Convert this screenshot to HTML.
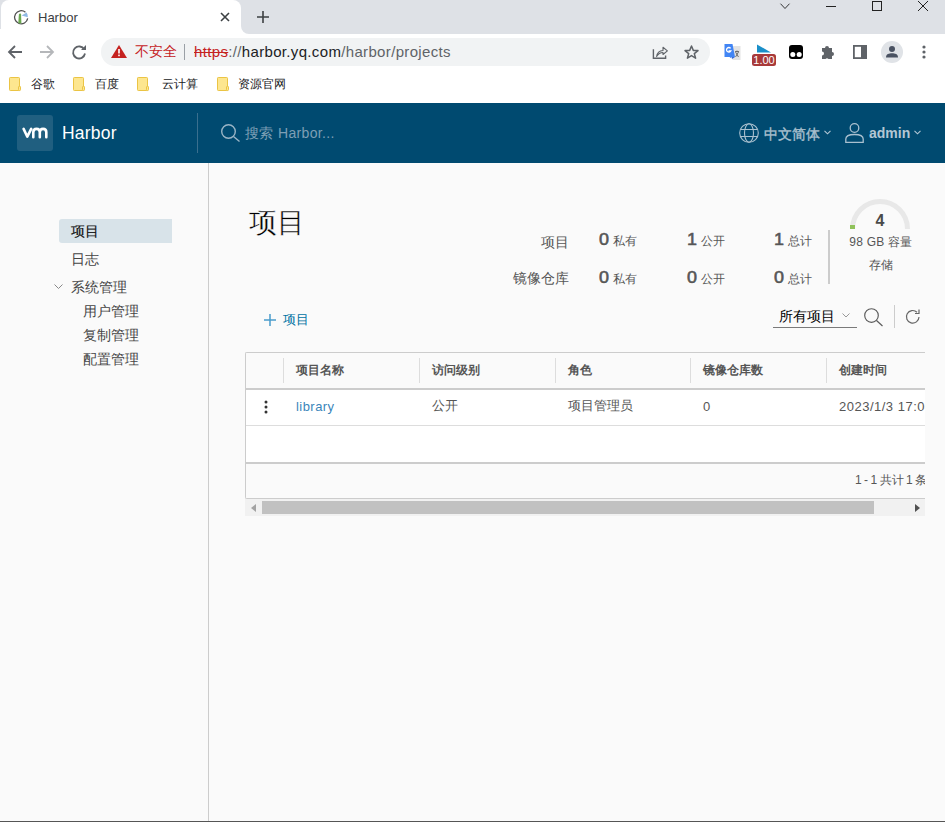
<!DOCTYPE html>
<html><head><meta charset="utf-8"><style>
*{box-sizing:border-box;margin:0;padding:0}
html,body{width:945px;height:822px;overflow:hidden;background:#fafafa;font-family:"Liberation Sans",sans-serif;position:relative}
.a{position:absolute;white-space:nowrap}
svg{position:absolute;overflow:visible}
/* chrome */
#tabstrip{left:0;top:0;width:945px;height:34px;background:#dee1e6}
#tabfoot{left:0;top:29px;width:2px;height:5px;background:#fff}
#tabr{left:241px;top:26px;width:8px;height:8px;background:#fff}
#tabr2{left:241px;top:26px;width:16px;height:8px;background:#dee1e6;border-bottom-left-radius:8px}
#tab{left:1px;top:0;width:240px;height:34px;background:#fff;border-radius:8px 8px 0 0}
#toolbar{left:0;top:34px;width:945px;height:35px;background:#fff}
#omni{left:101px;top:38px;width:609px;height:28px;background:#f1f3f4;border-radius:14px}
#bmbar{left:0;top:69px;width:945px;height:34px;background:#fff}
.bm{font-size:12px;color:#202124;top:77px;line-height:14px}
.fold{width:12px;height:14px;top:77px;background:#fde293;border:1px solid #f0c44c;border-radius:2px}
/* harbor header */
#hdr{left:0;top:103px;width:945px;height:60px;background:#004a70}
#side{left:0;top:163px;width:209px;height:659px;background:#fafafa;border-right:1px solid #ccc}
#bottomline{left:0;top:821px;width:945px;height:1px;background:#555}
.nav{font-size:14px;color:#454545;line-height:16px}
.stat-l{font-size:14px;color:#565656;line-height:16px}
.num{font-size:16px;font-weight:normal;-webkit-text-stroke:0.55px #565656;color:#565656;line-height:16px;text-align:right;transform:scaleX(1.12);transform-origin:right center}
.lab{font-size:12px;color:#565656;line-height:14px}
.th{font-size:12px;font-weight:bold;color:#555;line-height:14px}
.td{font-size:13px;color:#565656;line-height:14px}
.cdiv{width:1px;height:25px;top:358px;background:#ddd}
</style></head><body>
<!-- tab strip -->
<div class="a" id="tabstrip"></div>
<div class="a" id="tab"></div><div class="a" id="tabfoot"></div><div class="a" id="tabr"></div><div class="a" id="tabr2"></div>
<svg style="left:14px;top:9.5px" width="15" height="15" viewBox="0 0 15 15"><path d="M11.44 2.24A6.6 6.6 0 1 0 13.7 8.45" fill="none" stroke="#505050" stroke-width="1.3"/><path d="M4.3 13.2L4.9 4.2L6.2 3.3L7.1 4.2L7.4 13.5Z" fill="#6aa84f"/><path d="M7.6 5.6L12.6 2.6L13.6 4.8L13.8 7.2Z" fill="#8fb8e3"/></svg>
<div class="a" style="left:38px;top:10px;font-size:13px;color:#3c4043;line-height:15px">Harbor</div>
<svg style="left:220px;top:12px" width="10" height="10" viewBox="0 0 10 10"><path d="M1 1L9 9M9 1L1 9" stroke="#3c4043" stroke-width="1.6"/></svg>
<svg style="left:257px;top:11px" width="12" height="12" viewBox="0 0 12 12"><path d="M6 0V12M0 6H12" stroke="#3c4043" stroke-width="1.6"/></svg>
<!-- window controls -->
<svg style="left:780px;top:3px" width="10" height="7" viewBox="0 0 10 7"><path d="M0.5 0.7L5 5.5L9.5 0.7" fill="none" stroke="#222" stroke-width="0.9"/></svg>
<svg style="left:826px;top:6px" width="10" height="1" viewBox="0 0 10 1"><path d="M0 0.5H10" stroke="#222" stroke-width="1"/></svg>
<svg style="left:872px;top:1px" width="10" height="10" viewBox="0 0 10 10"><rect x="0.5" y="0.5" width="9" height="9" fill="none" stroke="#222" stroke-width="1"/></svg>
<svg style="left:918px;top:1px" width="10" height="10" viewBox="0 0 10 10"><path d="M0 0L10 10M10 0L0 10" stroke="#222" stroke-width="1"/></svg>
<!-- toolbar -->
<div class="a" id="toolbar"></div>
<svg style="left:8px;top:45px" width="14" height="14" viewBox="0 0 14 14"><path d="M14 7H1.5M7 1L1 7L7 13" fill="none" stroke="#5f6368" stroke-width="1.8"/></svg>
<svg style="left:40px;top:45px" width="14" height="14" viewBox="0 0 14 14"><path d="M0 7H12.5M7 1L13 7L7 13" fill="none" stroke="#b5b7ba" stroke-width="1.8"/></svg>
<svg style="left:72px;top:45px" width="15" height="15" viewBox="0 0 15 15"><path d="M12.3 4.5A6 6 0 1 0 13 8.5" fill="none" stroke="#5f6368" stroke-width="1.8"/><path d="M9 5H14V0Z" fill="#5f6368"/></svg>
<div class="a" id="omni"></div>
<svg style="left:111px;top:45px" width="16" height="13" viewBox="0 0 16 13"><path d="M8 0L16 13H0Z" fill="#c5221f"/><rect x="7.2" y="4" width="1.6" height="4.5" fill="#fff"/><rect x="7.2" y="9.6" width="1.6" height="1.6" fill="#fff"/></svg>
<div class="a" style="left:135px;top:43px;font-size:14px;color:#c5221f;line-height:17px">不安全</div>
<div class="a" style="left:184px;top:44px;width:1px;height:16px;background:#9aa0a6"></div>
<div class="a" style="left:194px;top:43px;font-size:15px;line-height:17px;color:#202124;letter-spacing:0.34px"><span style="color:#c5221f;text-decoration:line-through">https</span><span style="color:#5f6368">://</span>harbor.yq.com<span style="color:#5f6368">/harbor/projects</span></div>
<svg style="left:652px;top:45px" width="17" height="15" viewBox="0 0 17 15"><path d="M1.4 4.2V13.3H13.6V10.6" fill="none" stroke="#5f6368" stroke-width="1.4"/><path d="M4.6 11.6C5.2 7.6 7.8 5.6 11 5.5V2.3L15.4 5.9L11 9.5V7.5C8.4 7.5 6.2 8.8 4.6 11.6Z" fill="none" stroke="#5f6368" stroke-width="1.1" stroke-linejoin="round"/></svg>
<svg style="left:684px;top:45px" width="15" height="14" viewBox="0 0 15 14"><path d="M7.5 1L9.3 5.4L14 5.6L10.3 8.6L11.6 13.2L7.5 10.6L3.4 13.2L4.7 8.6L1 5.6L5.7 5.4Z" fill="none" stroke="#5f6368" stroke-width="1.5" stroke-linejoin="round"/></svg>
<!-- extensions -->
<svg style="left:724px;top:44px" width="17" height="17" viewBox="0 0 17 17"><rect x="8.5" y="2" width="8" height="14" fill="#e3e3e3"/><path d="M11 7.5H15M13 6.5V7.5M11.5 13L14.5 8M11.5 8L14.5 13" stroke="#555" stroke-width="0.8" fill="none"/><path d="M0.5 0H8.5L11 13H7.5L6.8 14L5.5 13H0.5Z" fill="#4285f4"/><path d="M7.5 13L11 13L8 15Z" fill="#3367d6"/><path d="M6.6 4.3A2.3 2.3 0 1 0 6.8 7H4.6" fill="none" stroke="#fff" stroke-width="1.3"/></svg>
<svg style="left:752px;top:44px" width="24" height="22" viewBox="0 0 24 22"><path d="M5 0.5L19 8.5H5Z" fill="#1a8fc9"/><rect x="0" y="10" width="24" height="12" rx="2.5" fill="#a83a3a"/><text x="12" y="20" font-size="11" text-anchor="middle" fill="#fff" font-family="Liberation Sans">1.00</text></svg>
<svg style="left:789px;top:45px" width="14" height="14" viewBox="0 0 14 14"><rect x="0" y="0" width="14" height="14" rx="3" fill="#000"/><circle cx="3.8" cy="9.6" r="2.5" fill="#fff"/><circle cx="10.2" cy="9.6" r="2.5" fill="#fff"/></svg>
<svg style="left:820px;top:44px" width="16" height="16" viewBox="0 0 16 16"><path d="M2 4H5A2 2 0 0 1 9 4H12V8A2 2 0 0 1 12 12V15H8.5A2 2 0 0 0 5.5 15H2V11.5A2 2 0 0 0 2 7.5Z" fill="#5f6368"/></svg>
<svg style="left:853px;top:45px" width="14" height="14" viewBox="0 0 14 14"><rect x="0.9" y="0.9" width="12.2" height="12.2" fill="none" stroke="#5f6368" stroke-width="1.8"/><rect x="8" y="1" width="5" height="12" fill="#5f6368"/></svg>
<svg style="left:881px;top:41px" width="22" height="22" viewBox="0 0 22 22"><circle cx="11" cy="11" r="11" fill="#e0e3e7"/><circle cx="11" cy="8" r="3" fill="#4a5262"/><path d="M5 16.5C5 13 8 12.3 11 12.3S17 13 17 16.5Z" fill="#4a5262"/></svg>
<svg style="left:922px;top:45px" width="4" height="14" viewBox="0 0 4 14"><circle cx="2" cy="2" r="1.6" fill="#5f6368"/><circle cx="2" cy="7" r="1.6" fill="#5f6368"/><circle cx="2" cy="12" r="1.6" fill="#5f6368"/></svg>
<!-- bookmarks -->
<div class="a" id="bmbar"></div>
<svg style="left:9px;top:77px" width="12" height="14" viewBox="0 0 12 14"><rect x="0.5" y="0.5" width="10" height="13" rx="0.8" fill="#fde68f" stroke="#ebc444" stroke-width="1"/><rect x="9.5" y="9.3" width="2" height="4.2" rx="0.8" fill="#fde68f" stroke="#ebc444" stroke-width="1"/></svg><div class="a bm" style="left:31px">谷歌</div>
<svg style="left:73px;top:77px" width="12" height="14" viewBox="0 0 12 14"><rect x="0.5" y="0.5" width="10" height="13" rx="0.8" fill="#fde68f" stroke="#ebc444" stroke-width="1"/><rect x="9.5" y="9.3" width="2" height="4.2" rx="0.8" fill="#fde68f" stroke="#ebc444" stroke-width="1"/></svg><div class="a bm" style="left:95px">百度</div>
<svg style="left:137px;top:77px" width="12" height="14" viewBox="0 0 12 14"><rect x="0.5" y="0.5" width="10" height="13" rx="0.8" fill="#fde68f" stroke="#ebc444" stroke-width="1"/><rect x="9.5" y="9.3" width="2" height="4.2" rx="0.8" fill="#fde68f" stroke="#ebc444" stroke-width="1"/></svg><div class="a bm" style="left:162px">云计算</div>
<svg style="left:217px;top:77px" width="12" height="14" viewBox="0 0 12 14"><rect x="0.5" y="0.5" width="10" height="13" rx="0.8" fill="#fde68f" stroke="#ebc444" stroke-width="1"/><rect x="9.5" y="9.3" width="2" height="4.2" rx="0.8" fill="#fde68f" stroke="#ebc444" stroke-width="1"/></svg><div class="a bm" style="left:238px">资源官网</div>

<!-- harbor header -->
<div class="a" id="hdr"></div>
<div class="a" style="left:17px;top:115px;width:36px;height:36px;background:#205f80;border-radius:3px"></div>
<svg style="left:17px;top:115px" width="36" height="36" viewBox="0 0 36 36"><path d="M6.6 13.9L10.3 21.7L14.2 13.9M16.3 22.3V17.2Q16.3 13.9 19.55 13.9Q22.8 13.9 22.8 17.2V22.3M22.8 17.2Q22.8 13.9 26.05 13.9Q29.3 13.9 29.3 17.2V22.3" fill="none" stroke="#fff" stroke-width="2.6" stroke-linecap="round" stroke-linejoin="round"/></svg>
<div class="a" style="left:62px;top:124px;font-size:17.5px;color:#fff;line-height:18px;letter-spacing:0.2px">Harbor</div>
<div class="a" style="left:197px;top:113px;width:1px;height:40px;background:#3a6f8e"></div>
<svg style="left:221px;top:124px" width="20" height="18" viewBox="0 0 20 18"><circle cx="7.5" cy="7.5" r="6.8" fill="none" stroke="#9ab5c6" stroke-width="1.4"/><path d="M12.5 12.5L18.5 17.5" stroke="#9ab5c6" stroke-width="1.4"/></svg>
<div class="a" style="left:245px;top:125px;font-size:14px;color:#7d9fb5;line-height:16px;letter-spacing:0.35px">搜索 Harbor...</div>
<svg style="left:739px;top:123px" width="20" height="20" viewBox="0 0 20 20"><g fill="none" stroke="#a9c0cf" stroke-width="1.1"><circle cx="10" cy="10" r="9.3"/><ellipse cx="10" cy="10" rx="4.5" ry="9.3"/><path d="M1.8 6.5H18.2M1.8 13.5H18.2"/></g></svg>
<div class="a" style="left:764px;top:125.5px;font-size:14px;color:#aac0ce;line-height:16px;-webkit-text-stroke:0.35px #aac0ce">中文简体</div>
<svg style="left:824px;top:130px" width="7" height="5" viewBox="0 0 7 5"><path d="M0.5 0.8L3.5 3.8L6.5 0.8" fill="none" stroke="#b3c7d4" stroke-width="1.1"/></svg>
<svg style="left:845px;top:123px" width="19" height="20" viewBox="0 0 19 20"><g fill="none" stroke="#a9c0cf" stroke-width="1.3"><circle cx="9.5" cy="5" r="4.3"/><path d="M0.8 19.3V16C0.8 13 4 11.5 9.5 11.5S18.2 13 18.2 16V19.3Z"/></g></svg>
<div class="a" style="left:869px;top:125px;font-size:14px;font-weight:bold;color:#b3c7d4;line-height:16px">admin</div>
<svg style="left:914px;top:130px" width="7" height="5" viewBox="0 0 7 5"><path d="M0.5 0.8L3.5 3.8L6.5 0.8" fill="none" stroke="#b3c7d4" stroke-width="1.1"/></svg>

<!-- sidebar -->
<div class="a" id="side"></div>
<div class="a" style="left:59px;top:219px;width:113px;height:24px;background:#d8e3e9;border-radius:3px 0 0 3px"></div>
<div class="a nav" style="left:71px;top:223px;color:#111;-webkit-text-stroke:0.15px #111">项目</div>
<div class="a nav" style="left:70.5px;top:251px">日志</div>
<svg style="left:54px;top:284px" width="9" height="5" viewBox="0 0 9 5"><path d="M0.5 0.5L4.5 4.5L8.5 0.5" fill="none" stroke="#888" stroke-width="1"/></svg>
<div class="a nav" style="left:71px;top:279px">系统管理</div>
<div class="a nav" style="left:83px;top:303px">用户管理</div>
<div class="a nav" style="left:83px;top:327px">复制管理</div>
<div class="a nav" style="left:83px;top:351px">配置管理</div>

<!-- main -->
<div class="a" style="left:249px;top:206.5px;font-size:27.5px;font-weight:300;color:#000;line-height:32px;-webkit-text-stroke:0.45px #fafafa">项目</div>
<div class="a stat-l" style="left:541px;top:234px">项目</div>
<div class="a stat-l" style="left:513px;top:270px">镜像仓库</div>
<div class="a num" style="left:578px;top:232px;width:31px">0</div><div class="a lab" style="left:613px;top:234px">私有</div>
<div class="a num" style="left:666px;top:232px;width:31px">1</div><div class="a lab" style="left:701px;top:234px">公开</div>
<div class="a num" style="left:753px;top:232px;width:31px">1</div><div class="a lab" style="left:788px;top:234px">总计</div>
<div class="a num" style="left:578px;top:270px;width:31px">0</div><div class="a lab" style="left:613px;top:272px">私有</div>
<div class="a num" style="left:666px;top:270px;width:31px">0</div><div class="a lab" style="left:701px;top:272px">公开</div>
<div class="a num" style="left:753px;top:270px;width:31px">0</div><div class="a lab" style="left:788px;top:272px">总计</div>
<div class="a" style="left:828px;top:230px;width:2px;height:54px;background:#ccc"></div>
<svg style="left:850px;top:199px" width="60" height="31" viewBox="0 0 60 31"><path d="M2.5 30A27.5 27.5 0 0 1 57.5 30" fill="none" stroke="#e8e8e8" stroke-width="5"/><rect x="0" y="26" width="5" height="4" fill="#8fc15a"/></svg>
<div class="a" style="left:850px;top:212px;width:60px;text-align:center;font-size:16px;font-weight:bold;color:#4a4a4a;line-height:18px">4</div>
<div class="a" style="left:840px;top:235px;width:82px;text-align:center;font-size:12px;letter-spacing:0.25px;color:#565656;line-height:14px">98 GB 容量</div>
<div class="a" style="left:841px;top:258px;width:80px;text-align:center;font-size:12px;color:#565656;line-height:14px">存储</div>

<svg style="left:264px;top:314px" width="12" height="12" viewBox="0 0 12 12"><path d="M6 0V12M0 6H12" stroke="#4a9ccb" stroke-width="1.5"/></svg>
<div class="a" style="left:283px;top:313px;font-size:12.5px;color:#0072a3;line-height:14px">项目</div>
<div class="a" style="left:779px;top:308px;font-size:14px;color:#000;line-height:16px">所有项目</div>
<svg style="left:842px;top:313px" width="8" height="5" viewBox="0 0 8 5"><path d="M0.5 0.5L4 4L7.5 0.5" fill="none" stroke="#999" stroke-width="1"/></svg>
<div class="a" style="left:773px;top:327px;width:84px;height:1px;background:#7a7a7a"></div>
<svg style="left:864px;top:308px" width="20" height="19" viewBox="0 0 20 19"><circle cx="7.5" cy="7.5" r="6.8" fill="none" stroke="#5a5a5a" stroke-width="1.15"/><path d="M12.5 12.5L18.5 18" stroke="#5a5a5a" stroke-width="1.15"/></svg>
<div class="a" style="left:894px;top:305px;width:1px;height:23px;background:#ccc"></div>
<svg style="left:905px;top:309px" width="16" height="16" viewBox="0 0 16 16"><path d="M14 8A6.3 6.3 0 1 1 12 3.2" fill="none" stroke="#666" stroke-width="1.2"/><path d="M14 0.5V4.5H10" fill="none" stroke="#666" stroke-width="1.2"/></svg>

<!-- table -->
<div class="a" style="left:245px;top:352px;width:680px;height:147px;border:1px solid #ccc;border-right:none;border-radius:2px 0 0 2px;background:#fff;overflow:hidden">
  <div class="a" style="left:0;top:0;width:680px;height:37px;background:#fafafa;border-bottom:2px solid #ccc"></div>
  <div class="a" style="left:0;top:109px;width:680px;height:37px;background:#fafafa;border-top:2px solid #ccc"></div>
  <div class="a" style="left:0;top:72px;width:680px;height:1px;background:#ddd"></div>
</div>
<div class="a cdiv" style="left:283px"></div>
<div class="a cdiv" style="left:419px"></div>
<div class="a cdiv" style="left:555px"></div>
<div class="a cdiv" style="left:690px"></div>
<div class="a cdiv" style="left:826px"></div>
<div class="a th" style="left:296px;top:363px">项目名称</div>
<div class="a th" style="left:432px;top:363px">访问级别</div>
<div class="a th" style="left:568px;top:363px">角色</div>
<div class="a th" style="left:703px;top:363px">镜像仓库数</div>
<div class="a th" style="left:839px;top:363px">创建时间</div>
<svg style="left:264px;top:400px" width="4" height="14" viewBox="0 0 4 14"><circle cx="2" cy="2" r="1.5" fill="#333"/><circle cx="2" cy="7" r="1.5" fill="#333"/><circle cx="2" cy="12" r="1.5" fill="#333"/></svg>
<div class="a td" style="left:296px;top:400px;color:#3a85ba;letter-spacing:0.45px">library</div>
<div class="a td" style="left:432px;top:399px">公开</div>
<div class="a td" style="left:568px;top:399px">项目管理员</div>
<div class="a td" style="left:703px;top:400px">0</div>
<div class="a" style="left:839px;top:400px;width:86px;overflow:hidden;font-size:13px;color:#565656;line-height:14px;letter-spacing:0.5px">2023/1/3 17:00</div>
<div class="a" style="left:855px;top:473px;width:70px;overflow:hidden;font-size:12px;color:#565656;line-height:14px;word-spacing:-0.9px">1 - 1 共计 1 条记录</div>
<!-- scrollbar -->
<div class="a" style="left:245px;top:499px;width:680px;height:17px;background:#f1f1f1"></div>
<div class="a" style="left:262px;top:501px;width:612px;height:13px;background:#c1c1c1"></div>
<svg style="left:251px;top:504px" width="5" height="8" viewBox="0 0 5 8"><path d="M5 0V8L0 4Z" fill="#a3a3a3"/></svg>
<svg style="left:915px;top:504px" width="5" height="8" viewBox="0 0 5 8"><path d="M0 0V8L5 4Z" fill="#505050"/></svg>
<div class="a" id="bottomline"></div>
</body></html>
